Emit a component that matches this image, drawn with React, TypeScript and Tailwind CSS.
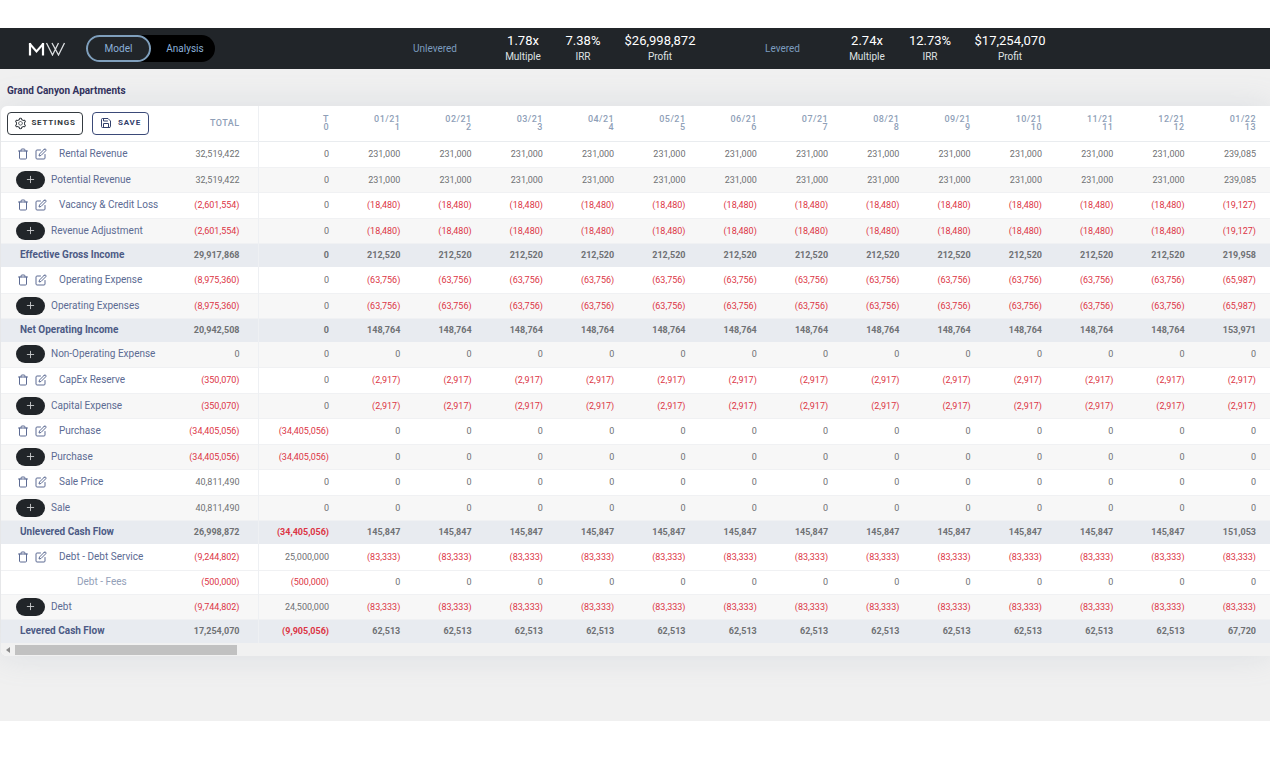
import clsx from "clsx";
import { FiEdit, FiPlus, FiSave, FiTrash } from "react-icons/fi";
import { AiOutlineSetting } from "react-icons/ai";

type RowKind = "item" | "group" | "total" | "sub";

interface Row {
    kind: RowKind;
    label: string;
    total: number;
    start: number;
    monthly: number;
    last: number;
}

interface Metric {
    value: string;
    label: string;
    width: string;
}

const rows: Row[] = [
    { kind: "item", label: "Rental Revenue", total: 32519422, start: 0, monthly: 231000, last: 239085 },
    { kind: "group", label: "Potential Revenue", total: 32519422, start: 0, monthly: 231000, last: 239085 },
    { kind: "item", label: "Vacancy & Credit Loss", total: -2601554, start: 0, monthly: -18480, last: -19127 },
    { kind: "group", label: "Revenue Adjustment", total: -2601554, start: 0, monthly: -18480, last: -19127 },
    { kind: "total", label: "Effective Gross Income", total: 29917868, start: 0, monthly: 212520, last: 219958 },
    { kind: "item", label: "Operating Expense", total: -8975360, start: 0, monthly: -63756, last: -65987 },
    { kind: "group", label: "Operating Expenses", total: -8975360, start: 0, monthly: -63756, last: -65987 },
    { kind: "total", label: "Net Operating Income", total: 20942508, start: 0, monthly: 148764, last: 153971 },
    { kind: "group", label: "Non-Operating Expense", total: 0, start: 0, monthly: 0, last: 0 },
    { kind: "item", label: "CapEx Reserve", total: -350070, start: 0, monthly: -2917, last: -2917 },
    { kind: "group", label: "Capital Expense", total: -350070, start: 0, monthly: -2917, last: -2917 },
    { kind: "item", label: "Purchase", total: -34405056, start: -34405056, monthly: 0, last: 0 },
    { kind: "group", label: "Purchase", total: -34405056, start: -34405056, monthly: 0, last: 0 },
    { kind: "item", label: "Sale Price", total: 40811490, start: 0, monthly: 0, last: 0 },
    { kind: "group", label: "Sale", total: 40811490, start: 0, monthly: 0, last: 0 },
    { kind: "total", label: "Unlevered Cash Flow", total: 26998872, start: -34405056, monthly: 145847, last: 151053 },
    { kind: "item", label: "Debt - Debt Service", total: -9244802, start: 25000000, monthly: -83333, last: -83333 },
    { kind: "sub", label: "Debt - Fees", total: -500000, start: -500000, monthly: 0, last: 0 },
    { kind: "group", label: "Debt", total: -9744802, start: 24500000, monthly: -83333, last: -83333 },
    { kind: "total", label: "Levered Cash Flow", total: 17254070, start: -9905056, monthly: 62513, last: 67720 },
];

const months = [
    "01/21", "02/21", "03/21", "04/21", "05/21", "06/21", "07/21",
    "08/21", "09/21", "10/21", "11/21", "12/21", "01/22",
];

const unlevered: Metric[] = [
    { value: "1.78x", label: "Multiple", width: "w-[60px]" },
    { value: "7.38%", label: "IRR", width: "w-[60px]" },
    { value: "$26,998,872", label: "Profit", width: "w-[94px]" },
];

const levered: Metric[] = [
    { value: "2.74x", label: "Multiple", width: "w-[60px]" },
    { value: "12.73%", label: "IRR", width: "w-[66px]" },
    { value: "$17,254,070", label: "Profit", width: "w-[94px]" },
];

const rowStyles: Record<RowKind, string> = {
    item: "h-[26px] bg-white border-b border-[#f0f1f3]",
    group: "h-[25px] bg-[#f7f7f7] border-b border-[#f0f1f3]",
    total: "h-6 bg-[#e8ebf0] font-bold",
    sub: "h-6 bg-white border-b border-[#f0f1f3]",
};

function format(value: number) {
    const text = Math.abs(value).toLocaleString("en-US");
    return value < 0 ? `(${text})` : text;
}

function Logo() {
    return (
        <svg width="38" height="14" viewBox="0 0 38 14" fill="none" aria-label="MW" role="img">
            <path d="M2 13.500V1M15 13.500V1" stroke="#fff" strokeWidth="2.200" />
            <path d="M1.500 1.500L8.500 9.500L15.500 1.500" stroke="#fff" strokeWidth="2" />
            <path
                d="M18.500 1L24.500 13L30.500 1M24 1L30.500 13L36.500 1"
                stroke="#dcdfe1"
                strokeWidth="1.300"
            />
        </svg>
    );
}

function MetricGroup({ title, metrics, className }: { title: string; metrics: Metric[]; className: string }) {
    return (
        <section className={clsx("flex items-center", className)}>
            <h2 className="text-[10px] text-[#7c9cbf]">{title}</h2>
            <dl className="ml-auto flex">
                {metrics.map((metric) => (
                    <div key={metric.label} className={clsx("flex flex-col-reverse items-center", metric.width)}>
                        <dt className="text-[10px] leading-4 text-[#dfe1e3]">{metric.label}</dt>
                        <dd className="text-[13px] leading-4 text-white">{metric.value}</dd>
                    </div>
                ))}
            </dl>
        </section>
    );
}

function Amount({ value, className }: { value: number; className?: string }) {
    return (
        <td
            className={clsx(
                "text-right text-[9px] leading-4",
                value < 0 ? "text-[#dc3545]" : "text-[#6f7174]",
                className ?? "pr-[14px]"
            )}
        >
            {format(value)}
        </td>
    );
}

function RowLabel({ row }: { row: Row }) {
    if (row.kind === "item") {
        return (
            <div className="flex items-center pl-4 text-[#5c6b93]">
                <button type="button" aria-label={`Delete ${row.label}`}>
                    <FiTrash size={12} />
                </button>
                <button type="button" className="ml-[6px]" aria-label={`Edit ${row.label}`}>
                    <FiEdit size={12} />
                </button>
                <span className="ml-3">{row.label}</span>
            </div>
        );
    }

    if (row.kind === "group") {
        return (
            <div className="flex items-center pl-[15px] text-[#5c6b93]">
                <button
                    type="button"
                    className="flex h-[18px] w-[29px] items-center justify-center rounded-full bg-[#212529] text-[#c9cbcd]"
                    aria-label={`Add to ${row.label}`}
                >
                    <FiPlus size={11} />
                </button>
                <span className="ml-[6px]">{row.label}</span>
            </div>
        );
    }

    if (row.kind === "total") {
        return <div className="pl-[19px] text-[#4c5a85]">{row.label}</div>;
    }

    return <div className="pl-[76px] text-[#93a0b8]">{row.label}</div>;
}

export default function App() {
    return (
        <div className="bg-white py-7 font-['Roboto',sans-serif]">
            <header className="flex h-[41px] items-center bg-[#212529]">
                <div className="ml-7">
                    <Logo />
                </div>
                <nav className="ml-5 flex h-[27px] rounded-full bg-black text-[10px] text-[#8bb0d8]">
                    <button type="button" className="w-[65px] rounded-full border-2 border-[#7f9fbc] bg-[#212529]">
                        Model
                    </button>
                    <button type="button" className="w-16 pl-1">
                        Analysis
                    </button>
                </nav>
                <MetricGroup title="Unlevered" metrics={unlevered} className="ml-[198px] w-[294px]" />
                <MetricGroup title="Levered" metrics={levered} className="ml-[58px] w-[292px]" />
            </header>

            <main className="overflow-hidden bg-[#f0f0f0] pb-[65px] pl-px">
                <h1 className="pt-[14px] pb-[8px] pl-[6px] text-[10px] leading-[15px] font-bold text-[#32325d]">
                    Grand Canyon Apartments
                </h1>
                <div className="overflow-hidden rounded-l-md bg-white shadow-[0_0_32px_rgba(136,152,170,0.2)]">
                    <table className="w-full min-w-[1200px] table-fixed border-collapse">
                        <colgroup>
                            <col className="w-[171px]" />
                            <col className="w-[86px]" />
                            <col className="w-[85px]" />
                            {months.map((month) => (
                                <col key={month} />
                            ))}
                        </colgroup>
                        <thead>
                            <tr className="h-[35px] border-b border-[#e9ecef] text-[9px] leading-2 tracking-wider text-[#8f9fb8]">
                                <th className="text-left">
                                    <div className="flex gap-[9px] pl-[6px]">
                                        <button
                                            type="button"
                                            className="flex h-[23px] w-[76px] items-center justify-center gap-1 rounded border border-[#343a40] text-[8px] leading-3 font-bold tracking-widest text-[#343a40]"
                                        >
                                            <AiOutlineSetting size={13} />
                                            SETTINGS
                                        </button>
                                        <button
                                            type="button"
                                            className="flex h-[23px] w-[57px] items-center justify-center gap-1.5 rounded border border-[#3b4a78] text-[8px] leading-3 font-bold tracking-widest text-[#32406c]"
                                        >
                                            <FiSave size={12} />
                                            SAVE
                                        </button>
                                    </div>
                                </th>
                                <th className="border-r border-[#eef0f3] pr-[18px] text-right font-medium">TOTAL</th>
                                <th className="pr-[14px] text-right font-medium">
                                    T<br />0
                                </th>
                                {months.map((month, i) => (
                                    <th key={month} className="pr-[14px] text-right font-medium">
                                        {month}
                                        <br />
                                        {i + 1}
                                    </th>
                                ))}
                            </tr>
                        </thead>
                        <tbody>
                            {rows.map((row, i) => (
                                <tr key={i} className={rowStyles[row.kind]}>
                                    <th
                                        scope="row"
                                        className={clsx(
                                            "text-left text-[10px] leading-4 whitespace-nowrap",
                                            row.kind === "total" ? "font-bold" : "font-normal"
                                        )}
                                    >
                                        <RowLabel row={row} />
                                    </th>
                                    <Amount value={row.total} className="border-r border-[#eef0f3] pr-[18px]" />
                                    <Amount value={row.start} />
                                    {months.map((month, m) => (
                                        <Amount key={month} value={m === months.length - 1 ? row.last : row.monthly} />
                                    ))}
                                </tr>
                            ))}
                        </tbody>
                    </table>
                    <div className="flex h-[13px] items-center bg-[#f1f1f1] pl-[5px]" aria-hidden="true">
                        <svg width="4" height="6" viewBox="0 0 4 6">
                            <path d="M4 0V6L0 3Z" fill="#8b8b8b" />
                        </svg>
                        <div className="ml-[5px] h-[10px] w-[222px] bg-[#c1c1c1]" />
                    </div>
                </div>
            </main>
        </div>
    );
}
